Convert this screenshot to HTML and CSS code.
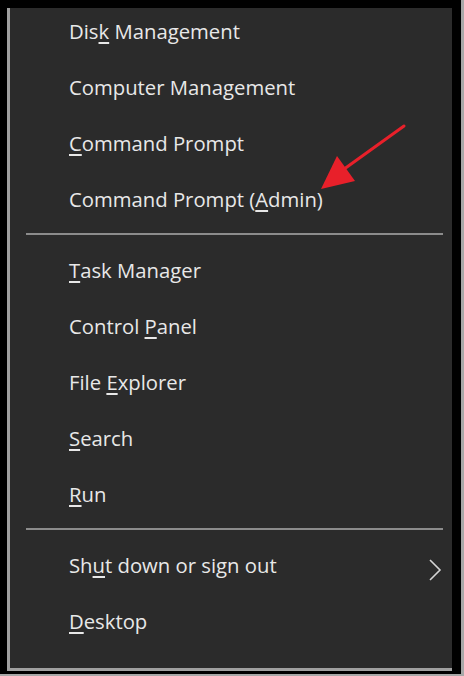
FILE: index.html
```html
<!doctype html>
<html lang="en">

<head>
  <meta charset="utf-8">
  <meta name="viewport" content="width=device-width, initial-scale=1">
  <title>Quick Link Menu</title>
  <link rel="stylesheet" href="styles.css">
</head>

<body>
  <div class="frame">
    <div class="menu">
      <div class="item"><span>Dis<u>k</u> Management</span></div>
      <div class="item"><span>Computer Management</span></div>
      <div class="item"><span><u>C</u>ommand Prompt</span></div>
      <div class="item"><span>Command Prompt (<u>A</u>dmin)</span></div>
      <div class="sep"></div>
      <div class="item"><span><u>T</u>ask Manager</span></div>
      <div class="item"><span>Control <u>P</u>anel</span></div>
      <div class="item"><span>File <u>E</u>xplorer</span></div>
      <div class="item"><span><u>S</u>earch</span></div>
      <div class="item"><span><u>R</u>un</span></div>
      <div class="sep"></div>
      <div class="item submenu">
        <span>Sh<u>u</u>t down or sign out</span>
        <svg class="chevron" width="14" height="22" viewBox="0 0 14 22">
          <polyline points="2,1 12,11 2,21" fill="none" stroke="#d4d4d4" stroke-width="1.6" />
        </svg>
      </div>
      <div class="item"><span><u>D</u>esktop</span></div>

      <!-- annotation pointing at the admin prompt -->
      <svg class="pointer" width="464" height="676" viewBox="0 0 464 676">
        <line x1="404" y1="126" x2="340" y2="172" stroke="#e8202a" stroke-width="3" stroke-linecap="round" />
        <polygon points="321,189 355,181 337,156" fill="#e8202a" />
      </svg>
    </div>
  </div>
</body>
</html>
```

FILE: styles.css
```css
html, body {
  margin: 0;
  background: #000;
}
.frame {
  width: 464px;
  height: 676px;
  box-sizing: border-box;
  padding: 8px 9px 0 7px;
  border-right: 3px solid #a8a8a8;
  border-bottom: 2px solid #a8a8a8;
  background: #000;
}
.menu {
  height: 660px;
  background: #2b2b2b;
  border-left: 3px solid #a0a0a0;
  border-bottom: 3px solid #a0a0a0;
  font-family: 'Open Sans', 'Noto Sans', sans-serif;
  font-size: 20.3px;
  font-weight: 500;
  color: #e8e8e8;
}
.item {
  height: 56px;
  box-sizing: border-box;
  padding: 0 10px 11px 59px;
  display: flex;
  align-items: center;
  white-space: pre;
}
.item u {
  text-decoration-thickness: 2px;
  text-underline-offset: 3px;
}
.submenu {
  justify-content: space-between;
}
.chevron {
  margin-top: 10px;
}
.sep {
  height: 2px;
  margin: 1px 9px 12px 16px;
  background: #8c8c8c;
}
.pointer {
  position: absolute;
  left: 0;
  top: 0;
  pointer-events: none;
}
```
